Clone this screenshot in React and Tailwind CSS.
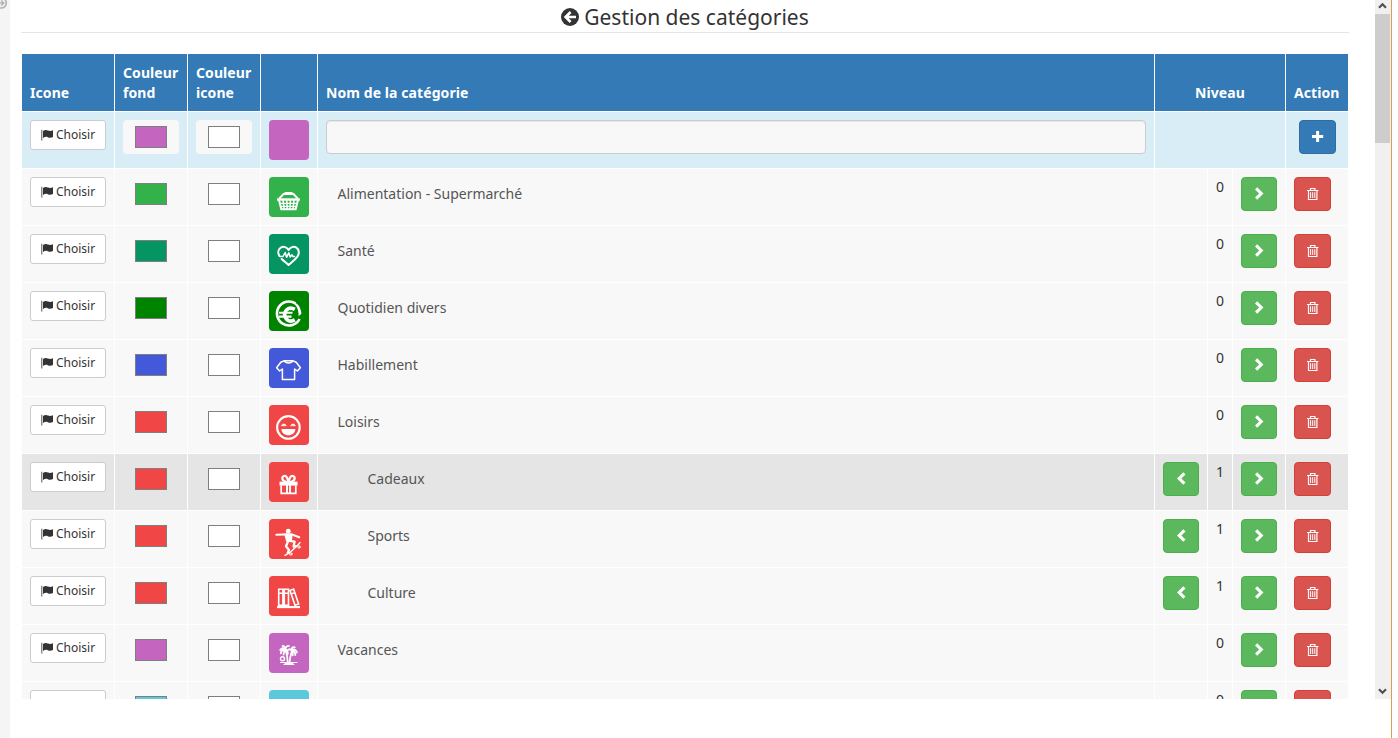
import React from 'react';

const GRID =
  'grid grid-cols-[92px_72px_72px_56px_836px_52px_24px_52px_62px] gap-x-px';

const ICONS = {
  basket: (
    <g fill="none" stroke="#fff">
      <path d="M10.3 21.5L14.5 17H24.5L28.7 21.5" strokeWidth="1.9" />
      <path d="M15.5 16.2H23.5" strokeWidth="2.4" />
      <path d="M8 22.5H31" strokeWidth="2.4" />
      <path d="M10 23L12.3 32.2H26.7L29 23" strokeWidth="2" />
      <path d="M10.5 26.4H28.5M11 29.4H28" strokeWidth="1.3" />
      <path d="M14 23L15.2 32M17.8 23L18.2 32M21.4 23L21 32M25 23L24 32" strokeWidth="1.5" />
    </g>
  ),
  heart: (
    <g fill="none" stroke="#fff" strokeWidth="2" strokeLinejoin="round" strokeLinecap="round">
      <path d="M10.4 22C8.6 19 9 15.5 11.8 13.7C14.6 12 18 13 19.6 16C21.2 13 24.6 12 27.4 13.7C30.4 15.6 30.5 19.8 28.2 22.8C26 25.7 22.6 28.2 19.6 31C17 28.5 14.5 26.8 12.7 25" />
      <path d="M10.8 22.5H14L16.2 18.5L17.6 23.3L19.8 18.8L21.2 23L23 20.8L24 22.5H25.5" strokeWidth="1.5" />
    </g>
  ),
  euro: (
    <g fill="none" stroke="#fff">
      <path d="M26.5 12.4A12 12 0 1 0 30.6 28" strokeWidth="2.6" />
      <path d="M22 10.2C28 11 32 15.5 32.4 22.8L29.6 25.2C29.8 18.5 27.5 13.8 22 10.2Z" fill="#fff" stroke="none" />
      <path d="M25.8 18.4C21.5 15.8 16.4 17.2 15.6 23.6C16.4 30.2 21.5 31.4 25.8 28.9" strokeWidth="3.6" />
      <path d="M10 21.8H23.5M10 25.6H22.5" strokeWidth="2.1" />
    </g>
  ),
  shirt: (
    <g fill="none" stroke="#fff" strokeWidth="1.5" strokeLinejoin="round">
      <path d="M15.3 12.8L11.8 14.2L7.6 19.8L10.6 23L13.4 21V31.5H25.6V21L28.4 23L31.4 19.8L27.2 14.2L23.7 12.8C22.3 15.8 16.7 15.8 15.3 12.8ZM15.3 12.8H23.7" />
    </g>
  ),
  smile: (
    <g fill="none" stroke="#fff">
      <circle cx="19.4" cy="22.4" r="11.3" strokeWidth="2.1" />
      <path d="M12.3 20.8C13 18.4 16.6 18.4 17.3 20.8ZM21.5 20.8C22.2 18.4 25.8 18.4 26.5 20.8Z" fill="#fff" strokeWidth="0.5" />
      <path d="M12.5 24.1H26.3C26.3 32.4 12.5 32.4 12.5 24.1Z" fill="#fff" stroke="none" />
    </g>
  ),
  gift: (
    <g fill="none" stroke="#fff">
      <path d="M19.5 20C16 19.8 13.5 18.5 13.3 16.3C13.2 13.8 16.5 13 17.8 15.2C18.5 16.5 19 18 19.5 20C20 18 20.5 16.5 21.2 15.2C22.5 13 25.8 13.8 25.7 16.3C25.5 18.5 23 19.8 19.5 20Z" strokeWidth="2.2" />
      <path d="M10.5 19.6H28.5V23.6H10.5Z" fill="#fff" stroke="none" />
      <path d="M12.2 23.5V31.4H26.8V23.5" strokeWidth="1.7" />
      <path d="M18 20V31.5M21 20V31.5" strokeWidth="1.9" />
    </g>
  ),
  skate: (
    <g fill="none" stroke="#fff" strokeLinejoin="round" strokeLinecap="round">
      <circle cx="19.3" cy="12.2" r="2.4" fill="#fff" stroke="none" />
      <path d="M7.3 15.7L14 15.5H23L30.2 18.3" strokeWidth="2" />
      <path d="M15.5 15H22.8L22.8 19L22 22H17.5L17 19Z" fill="#fff" strokeWidth="1.2" />
      <path d="M19 22.5L17 27.2L20 31L18.8 34" strokeWidth="2.3" />
      <path d="M20.5 21.8L25.6 22.6L24.6 27.5L27 27.2" strokeWidth="2.3" />
      <path d="M16 36.3L21.5 33L29.2 25.8L31 23.6" strokeWidth="1.4" />
      <circle cx="21.8" cy="35" r="1.2" strokeWidth="1" />
      <circle cx="30" cy="28" r="1.2" strokeWidth="1" />
    </g>
  ),
  books: (
    <g fill="none" stroke="#fff" strokeWidth="1.6">
      <path d="M9.7 13.2H13.9V29.2H9.7ZM15.3 13.2H19.5V29.2H15.3Z" />
      <path d="M21 14.4L24.6 13.1L29.6 28L26 29.2Z" />
      <path d="M10 17.2H14M15.3 17.2H19.5M22 17.9L26 16.6" strokeWidth="1.4" />
      <path d="M8 31.1H31" strokeWidth="2.1" />
    </g>
  ),
  palm: (
    <g fill="none" stroke="#fff" strokeLinecap="round">
      <path d="M16.6 17C17.9 21 18.7 25 18.7 30M22.8 18C21.6 22 20.7 26 20.5 30" strokeWidth="1.8" />
      <path d="M16.5 16.5C14.5 14.2 12.5 14.8 11.2 17M16.5 16.5C13.8 16.3 12 18 11.8 20.3M16.5 16.5C15 18.3 14.3 20 14.5 21.6M16.5 16.5C16 13.5 14.5 12.7 13.5 13M16.5 16.5C17 13.5 18.5 12.5 20 13M16.5 16.5C18.2 17.5 19 19.5 18.8 21" strokeWidth="1.8" />
      <path d="M22.7 17.3C20.8 15.8 19.5 16 18.5 17.5M22.7 17.3C22.3 15 23.5 13.6 25.8 14.3M22.7 17.3C24.8 15.5 27.3 17 28 19.5M22.7 17.3C25.2 18 26.5 20 26.3 22.2M22.7 17.3C23.8 19.5 24 21 23.7 22.3" strokeWidth="1.8" />
      <circle cx="13.5" cy="25.8" r="2" strokeWidth="1.4" />
      <path d="M11.5 29.5H17M22 29.5H28" strokeWidth="1" />
      <path d="M14.2 32C16 28.2 24 28.2 25.6 32Z" fill="#fff" stroke="none" />
    </g>
  ),
};

const ROWS = [
  { name: 'Alimentation - Supermarché', color: 'bg-[#33b14b]', icon: 'basket', level: 0 },
  { name: 'Santé', color: 'bg-[#049562]', icon: 'heart', level: 0 },
  { name: 'Quotidien divers', color: 'bg-[#008400]', icon: 'euro', level: 0 },
  { name: 'Habillement', color: 'bg-[#4458da]', icon: 'shirt', level: 0 },
  { name: 'Loisirs', color: 'bg-[#f14646]', icon: 'smile', level: 0 },
  { name: 'Cadeaux', color: 'bg-[#f14646]', icon: 'gift', level: 1, hovered: true },
  { name: 'Sports', color: 'bg-[#f14646]', icon: 'skate', level: 1 },
  { name: 'Culture', color: 'bg-[#f14646]', icon: 'books', level: 1 },
  { name: 'Vacances', color: 'bg-[#c466c0]', icon: 'palm', level: 0 },
  { name: '', color: 'bg-[#5bc8dc]', icon: null, level: 0 },
];

function ChooseButton() {
  return (
    <button className="flex h-[30px] w-[76px] items-center rounded-[3px] border border-[#ccc] bg-white pl-[10px] text-[12px] leading-[18px] text-[#333]">
      <svg className="mr-[3px] h-3 w-3 shrink-0" viewBox="0 0 12 12">
        <path d="M0.3 0.8H1.3V11.5H0.3Z" fill="#555" />
        <path d="M2 2C4 0.8 5.6 1 7 1.6C8.6 2.3 10 2.2 12 1.3V8C10 9 8.4 9 6.8 8.2C5.2 7.5 4 7.7 2 8.9Z" fill="#333" />
      </svg>
      Choisir
    </button>
  );
}

function Swatch({ color }) {
  return (
    <div className="flex h-[34px] w-14 items-center justify-center rounded bg-[#f8f8f8]">
      <div className={`h-[22px] w-8 border border-[#7f7f7f] ${color}`} />
    </div>
  );
}

function Tile({ color, icon }) {
  return (
    <div className={`h-10 w-10 rounded ${color}`}>
      {icon && (
        <svg className="block h-10 w-10" viewBox="0 0 40 40">
          {ICONS[icon]}
        </svg>
      )}
    </div>
  );
}

function LevelButton({ left }) {
  return (
    <button className="flex h-[34px] w-9 items-center justify-center rounded border border-[#4cae4c] bg-[#5cb85c]">
      <svg className="h-[14px] w-[14px]" viewBox="0 0 14 14" fill="none" stroke="#fff" strokeWidth="3.1">
        <path d={left ? 'M10.4 1.3L5.2 6.5L10.4 11.7' : 'M4.1 1.3L9.3 6.5L4.1 11.7'} />
      </svg>
    </button>
  );
}

function DeleteButton() {
  return (
    <button className="flex h-[34px] w-[37px] items-center justify-center rounded border border-[#d43f3a] bg-[#d9534f]">
      <svg className="h-[14px] w-[13px]" viewBox="0 0 13 14" fill="none" stroke="#fff">
        <path d="M1 3.5H12.4M4.5 3.3V1.5H8.9V3.3M2.5 3.5V12.5H10.9V3.5" strokeWidth="1.2" />
        <path d="M4.6 5.2V11M6.7 5.2V11M8.8 5.2V11" strokeWidth="1" />
      </svg>
    </button>
  );
}

function Row({ row }) {
  const bg = row.hovered ? 'bg-[#e5e5e5]' : 'bg-[#f8f8f8]';
  const cell = `h-14 pt-2 pl-2 ${bg}`;
  return (
    <div className={`${GRID} mb-px`}>
      <div className={cell}><ChooseButton /></div>
      <div className={cell}>
        <div className="flex h-[34px] w-14 items-center justify-center">
          <div className={`h-[22px] w-8 border border-[#7f7f7f] ${row.color}`} />
        </div>
      </div>
      <div className={cell}>
        <div className="flex h-[34px] w-14 items-center justify-center">
          <div className="h-[22px] w-8 border border-[#7f7f7f] bg-white" />
        </div>
      </div>
      <div className={cell}><Tile color={row.color} icon={row.icon} /></div>
      <div className={`${cell} text-[#555]`}>
        <div className={`leading-[34px] ${row.level ? 'pl-[41.5px]' : 'pl-[11.5px]'}`}>{row.name}</div>
      </div>
      <div className={cell}>{row.level > 0 && <LevelButton left />}</div>
      <div className={`h-14 pt-2 text-center text-[#333] ${bg}`}>{row.level}</div>
      <div className={cell}><LevelButton /></div>
      <div className={cell}><DeleteButton /></div>
    </div>
  );
}

export default function App() {
  const head = 'flex h-[57px] items-end bg-[#337ab7] px-2 pb-2';
  const add = 'h-14 bg-[#d9edf7] pt-2 pl-2';
  return (
    <div className="flex h-[738px] w-[1398px] overflow-hidden bg-white font-['Noto_Sans',sans-serif] text-[14px] leading-5 text-[#333]">
      <aside className="h-full w-[10px] shrink-0 overflow-hidden bg-[#f5f5f5]">
        <svg className="block h-3 w-[10px]" viewBox="0 0 10 12" fill="none" stroke="#b5b5b5">
          <circle cx="1.3" cy="3" r="5" strokeWidth="1.7" />
          <path d="M-2 3H4M1.2 0.4L3.8 3L1.2 5.6" strokeWidth="1.5" />
        </svg>
      </aside>

      <main className="h-[699px] w-[1365px] shrink-0 overflow-hidden pl-[11px]">
        <h1 className="mr-[26px] flex h-[33px] items-center justify-center border-b border-[#e5e5e5] pt-[2px] text-[21px] leading-[23px]">
          <svg className="mr-[5px] h-[18px] w-[18px]" viewBox="0 0 18 18">
            <circle cx="9" cy="9" r="9" fill="#333" />
            <path d="M15 9H5.5M9.6 4L4.6 9L9.6 14" fill="none" stroke="#fff" strokeWidth="2.6" />
          </svg>
          Gestion des catégories
        </h1>

        <div className="ml-px mt-[21px] w-[1326px]">
          <div className={`${GRID} mb-px font-bold tracking-[0.08px] text-white`}>
            <div className={head}>Icone</div>
            <div className={head}>Couleur fond</div>
            <div className={head}>Couleur icone</div>
            <div className={head} />
            <div className={head}>Nom de la catégorie</div>
            <div className={`${head} col-span-3 justify-center`}>Niveau</div>
            <div className={head}>Action</div>
          </div>

          <div className={`${GRID} mb-px`}>
            <div className={add}><ChooseButton /></div>
            <div className={add}><Swatch color="bg-[#c466c0]" /></div>
            <div className={add}><Swatch color="bg-white" /></div>
            <div className={add}><Tile color="bg-[#c466c0]" /></div>
            <div className={add}>
              <input
                aria-label="Nom de la catégorie"
                className="block h-[34px] w-[820px] rounded border border-[#ccc] bg-[#f8f8f8] px-3 shadow-[inset_0_1px_1px_rgba(0,0,0,0.075)]"
              />
            </div>
            <div className={`${add} col-span-3`} />
            <div className="h-14 bg-[#d9edf7] pl-[13px] pt-2">
              <button className="flex h-[34px] w-[37px] items-center justify-center rounded border border-[#2e6da4] bg-[#337ab7]">
                <svg className="h-[14px] w-[14px]" viewBox="0 0 14 14" fill="none" stroke="#fff" strokeWidth="3">
                  <path d="M1 6.5H12.2M6.6 1V12" />
                </svg>
              </button>
            </div>
          </div>

          {ROWS.map((row, i) => (
            <Row key={i} row={row} />
          ))}
        </div>
      </main>

      <div className="flex h-[699px] w-4 shrink-0 flex-col bg-[#f0f0f0]">
        <div className="flex h-[14px] items-start pl-[3px] pt-[2px]">
          <svg className="h-[7px] w-[9px]" viewBox="0 0 9 7" fill="none" stroke="#505050" strokeWidth="2.2">
            <path d="M1 5.8L4.5 2.3L8 5.8" />
          </svg>
        </div>
        <div className="h-[129px] w-[15px] bg-[#cdcdcd]" />
        <div className="mt-auto flex h-[11px] items-start pl-[3px]">
          <svg className="h-[7px] w-[9px]" viewBox="0 0 9 7" fill="none" stroke="#505050" strokeWidth="2.2">
            <path d="M1 1.2L4.5 4.7L8 1.2" />
          </svg>
        </div>
      </div>
      <div className="h-full w-px shrink-0 bg-[#dba04e]" />
    </div>
  );
}
